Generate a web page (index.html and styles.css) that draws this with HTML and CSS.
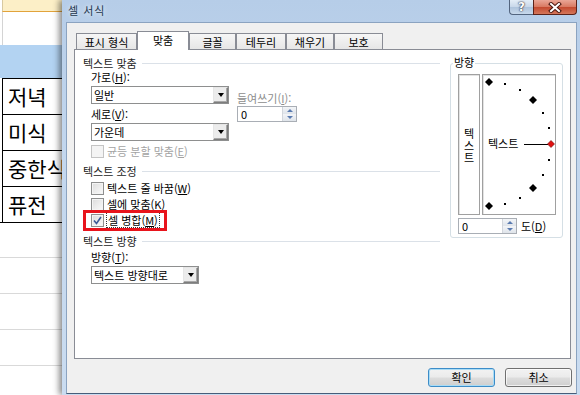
FILE: index.html
```html
<!DOCTYPE html>
<html lang="ko">
<head>
<meta charset="utf-8">
<title>셀 서식</title>
<link rel="stylesheet" href="styles.css">
</head>
<body>
<div class="screen">
  <div class="sheet">
    <div class="r-head"></div>
    <div class="r-white"></div>
    <div class="r-blue"></div>
    <div class="r-data">저녁</div>
    <div class="r-data">미식</div>
    <div class="r-data">중한식</div>
    <div class="r-data">퓨전</div>
    <div class="r-empty"></div>
    <div class="r-empty"></div>
    <div class="r-empty"></div>
    <div class="r-empty"></div>
    <div class="r-empty"></div>
  </div>

  <div class="window">
    <div class="titlebar">
      <span class="title">셀 서식</span>
      <div class="caption-btns">
        <div class="cap-help">?</div>
        <div class="cap-close">
          <svg width="14" height="11" viewBox="0 0 14 11">
            <path d="M3 2 L11 9 M11 2 L3 9" stroke="#4a1710" stroke-width="4" stroke-linecap="square"/>
            <path d="M3 2 L11 9 M11 2 L3 9" stroke="#fff" stroke-width="2" stroke-linecap="square"/>
          </svg>
        </div>
      </div>
    </div>

    <div class="client">
      <div class="tabs">
        <div class="tab t1">표시 형식</div>
        <div class="tab t2 active">맞춤</div>
        <div class="tab t3">글꼴</div>
        <div class="tab t4">테두리</div>
        <div class="tab t5">채우기</div>
        <div class="tab t6">보호</div>
      </div>

      <div class="panel">
        <div class="left">
          <div class="group-label"><span>텍스트 맞춤</span><i class="rule"></i></div>
          <div class="align-block">
            <div class="col-main">
              <div class="lbl">가로(<u>H</u>):</div>
              <div class="combo wide"><span class="combo-text">일반</span><span class="drop"><i class="tri"></i></span></div>
              <div class="lbl gap3">세로(<u>V</u>):</div>
              <div class="combo wide"><span class="combo-text">가운데</span><span class="drop"><i class="tri"></i></span></div>
            </div>
            <div class="col-indent">
              <div class="lbl dim">들여쓰기(<u>I</u>):</div>
              <div class="spin indent-spin"><span class="spin-text">0</span><span class="spin-btns"><i class="up"></i><i class="down"></i></span></div>
            </div>
          </div>
          <div class="check disabled first"><span class="box"></span><span class="ctext">균등 분할 맞춤(<u>E</u>)</span></div>

          <div class="group-label mt6"><span>텍스트 조정</span><i class="rule"></i></div>
          <div class="check row16 first2"><span class="box"></span><span class="ctext">텍스트 줄 바꿈(<u>W</u>)</span></div>
          <div class="check row16"><span class="box"></span><span class="ctext">셀에 맞춤(<u>K</u>)</span></div>
          <div class="check row16 highlight"><span class="box checked"><svg width="9" height="9" viewBox="0 0 9 9"><path d="M1 4.5 L3.5 7.5 L8 1" fill="none" stroke="#3c5a96" stroke-width="1.6"/></svg></span><span class="ctext focus">셀 병합(<u>M</u>)</span></div>

          <div class="group-label mt6"><span>텍스트 방향</span><i class="rule"></i></div>
          <div class="sub">
            <div class="lbl gap2">방향(<u>T</u>):</div>
            <div class="combo narrow"><span class="combo-text">텍스트 방향대로</span><span class="drop"><i class="tri"></i></span></div>
          </div>
        </div>

        <div class="orient">
          <div class="orient-label">방향</div>
          <div class="orient-boxes">
            <div class="vbox"><span class="vtext">텍스트</span></div>
            <div class="dial">
              <svg width="72" height="139" viewBox="0 0 72 139">
                <g fill="#000">
                  <path d="M6 3 L10 7 L6 11 L2 7 Z"/>
                  <rect x="21" y="8" width="2" height="2"/>
                  <rect x="36" y="14" width="2" height="2"/>
                  <path d="M50 21 L54 25 L50 29 L46 25 Z"/>
                  <rect x="59" y="37" width="2" height="2"/>
                  <rect x="65" y="52" width="2" height="2"/>
                  <rect x="65" y="84" width="2" height="2"/>
                  <rect x="59" y="99" width="2" height="2"/>
                  <path d="M50 109 L54 113 L50 117 L46 113 Z"/>
                  <rect x="36" y="122" width="2" height="2"/>
                  <rect x="21" y="128" width="2" height="2"/>
                  <path d="M6 127 L10 131 L6 135 L2 131 Z"/>
                </g>
                <text x="5" y="73" font-family="Noto Sans CJK KR, sans-serif" font-size="11" fill="#000">텍스트</text>
                <path d="M41 69.5 H65" stroke="#000" stroke-width="1"/>
                <path d="M68 65.5 L71.5 69 L68 72.5 L64.5 69 Z" fill="#e01010" stroke="#600" stroke-width="0.6"/>
              </svg>
            </div>
          </div>
          <div class="deg-row">
            <div class="spin deg-spin"><span class="spin-text">0</span><span class="spin-btns"><i class="up"></i><i class="down"></i></span></div>
            <span class="deg-lbl">도(<u>D</u>)</span>
          </div>
        </div>
      </div>

      <div class="buttons">
        <div class="btn default">확인</div>
        <div class="btn">취소</div>
      </div>
    </div>
  </div>
</div>
</body>
</html>
```

FILE: styles.css
```css
*, *::before, *::after { box-sizing: border-box; }
html, body { margin: 0; padding: 0; }
body {
  width: 580px;
  height: 395px;
  overflow: hidden;
  background: #fff;
  color: #000;
  font-family: "Noto Sans CJK KR", "Noto Sans", sans-serif;
  font-size: 11px;
}
u { text-decoration: underline; text-underline-offset: 1px; }

.screen { display: flex; width: 580px; height: 395px; }

/* spreadsheet behind the dialog */
.sheet {
  width: 62px;
  flex: none;
  display: flex;
  flex-direction: column;
  overflow: hidden;
  background: #fff;
}
.r-head { flex: none; height: 12px; background: #fcefc7; border-bottom: 1px solid #e2a33b; border-left: 1px solid #d8c9a0; margin-left: 2px; }
.r-white { flex: none; height: 33px; border-left: 1px solid #d4d4d4; margin-left: 2px; }
.r-blue { flex: none; height: 33px; background: #b3d3f2; }
.r-data {
  flex: none;
  height: 36px;
  margin-left: 2px;
  border-left: 1px solid #000;
  border-top: 1px solid #000;
  padding-left: 5px;
  font-size: 21px;
  line-height: 34px;
  white-space: nowrap;
  color: #000;
}
.r-data + .r-empty { border-top: 1px solid #000; }
.r-empty { flex: none; height: 36px; border-bottom: 1px solid #d9d9d9; }

/* window */
.window {
  flex: 1;
  display: flex;
  flex-direction: column;
  padding: 0 3px 1px 4px;
  background: linear-gradient(180deg, #b6cde8 0%, #c3d7ee 40%, #cadcf0 100%);
  box-shadow: -3px 0 6px rgba(0, 0, 0, 0.45);
  position: relative;
}
.titlebar {
  height: 22px;
  flex: none;
  display: flex;
  align-items: flex-start;
  padding-left: 2px;
}
.title {
  padding-top: 3px;
  line-height: 14px;
  font-size: 11px;
  color: #23364d;
  text-shadow: 0 0 5px rgba(255, 255, 255, 0.9);
  letter-spacing: 1px;
}
.caption-btns { margin-left: auto; display: flex; }
.cap-help {
  width: 24px;
  height: 15px;
  border: 1px solid #53657f;
  border-top: none;
  border-right: none;
  border-bottom-left-radius: 4px;
  background: linear-gradient(180deg, #e4edf7 0%, #c9d8ea 48%, #aec3dc 52%, #c8d9ec 100%);
  color: #fff;
  font-weight: bold;
  font-size: 12px;
  line-height: 14px;
  text-align: center;
  font-family: "DejaVu Sans", sans-serif;
  text-shadow: 0 0 2px #223, 0 0 1px #223;
}
.cap-close {
  width: 44px;
  height: 15px;
  border: 1px solid #5b2219;
  border-top: none;
  border-bottom-right-radius: 4px;
  background: linear-gradient(180deg, #eaa696 0%, #d97a63 48%, #c44a30 52%, #d4765a 100%);
  display: flex;
  align-items: center;
  justify-content: center;
}

.client {
  flex: 1;
  display: flex;
  flex-direction: column;
  background: #f0f0f0;
  border: 1px solid #8ba3c0;
  border-bottom-color: #465d7a;
  padding: 8px 5px 6px 7px;
}

/* tabs */
.tabs {
  height: 18px;
  flex: none;
  display: flex;
  align-items: flex-end;
  padding-left: 2px;
  position: relative;
  z-index: 1;
}
.tab {
  height: 16px;
  border: 1px solid #898c95;
  border-bottom: none;
  background: linear-gradient(180deg, #f6f6f6, #e6e6e6);
  display: flex;
  align-items: center;
  justify-content: center;
  line-height: 14px;
  white-space: nowrap;
}
.tab.active { height: 19px; margin-bottom: -1px; background: #fff; padding-bottom: 2px; }
.t1 { width: 61px; }
.t2 { width: 52px; }
.t3 { width: 47px; }
.t4 { width: 50px; }
.t5 { width: 48px; }
.t6 { width: 49px; }

.panel {
  height: 310px;
  flex: none;
  background: #fff;
  border: 1px solid #898c95;
  display: flex;
  padding: 6px 7px 0 8px;
  gap: 10px;
}

.left { width: 357px; flex: none; display: flex; flex-direction: column; align-items: flex-start; }
.group-label {
  width: 100%;
  height: 14px;
  display: flex;
  align-items: center;
  line-height: 14px;
  color: #1b1b1b;
}
.group-label .rule { flex: 1; height: 1px; background: #dbe1e8; margin-left: 5px; margin-top: 1px; }
.mt6 { margin-top: 6px; }

.align-block { display: flex; padding-left: 8px; }
.col-main { display: flex; flex-direction: column; }
.col-indent { display: flex; flex-direction: column; margin-left: 8px; padding-top: 21px; }
.lbl { line-height: 14px; height: 14px; white-space: nowrap; }
.gap3 { margin-top: 3px; }
.gap2 { margin-top: 2px; }
.dim { color: #8d8d8d; }

.combo {
  margin-top: 2px;
  height: 18px;
  display: flex;
  border: 1px solid #8e8f8f;
  background: #fff;
}
.combo.wide { width: 138px; }
.combo.narrow { width: 108px; }
.combo-text { flex: 1; line-height: 16px; padding-left: 2px; white-space: nowrap; overflow: hidden; }
.drop {
  width: 15px;
  border: 1px solid #7d7d7d;
  border-top-color: #e6e6e6;
  border-left-color: #e6e6e6;
  background: #ececec;
  display: flex;
  align-items: center;
  justify-content: center;
  box-shadow: inset -1px -1px 0 #a8a8a8;
}
.tri { width: 0; height: 0; border-left: 3.5px solid transparent; border-right: 3.5px solid transparent; border-top: 4px solid #000; }

.spin {
  height: 16px;
  display: flex;
  border: 1px solid #a9aeb5;
  background: #fff;
}
.indent-spin { width: 60px; margin-top: 1px; }
.deg-spin { width: 59px; }
.spin-text { flex: 1; line-height: 14px; padding-left: 3px; }
.spin-btns { width: 14px; display: flex; flex-direction: column; border-left: 1px solid #d2d6dc; }
.spin-btns i {
  flex: 1;
  display: flex;
  align-items: center;
  justify-content: center;
  background: linear-gradient(180deg, #f3f5f8, #dfe4ea);
}
.spin-btns .up::after { content: ""; border-left: 3px solid transparent; border-right: 3px solid transparent; border-bottom: 3px solid #5a7bb0; }
.spin-btns .down::after { content: ""; border-left: 3px solid transparent; border-right: 3px solid transparent; border-top: 3px solid #5a7bb0; }

.check {
  display: inline-flex;
  align-items: center;
  padding-left: 8px;
  white-space: nowrap;
  position: relative;
}
.check.first { margin-top: 3px; height: 14px; line-height: 14px; }
.check.row16 { height: 16px; line-height: 14px; }
.check.first2 { margin-top: 2px; }
.box {
  width: 13px;
  height: 13px;
  border: 1px solid #8e8f8f;
  background: linear-gradient(135deg, #dcdcdc, #fbfbfb);
  box-shadow: inset 0 0 0 1px #f4f4f4;
  margin-right: 3px;
  display: flex;
  align-items: center;
  justify-content: center;
  flex: none;
}
.check.disabled { color: #a3a3a3; }
.check.disabled .box { border-color: #c4c4c4; background: #f4f4f4; }
.highlight::after {
  content: "";
  position: absolute;
  left: 0;
  top: -2px;
  width: 84px;
  height: 21px;
  border: 3px solid #e8141c;
  pointer-events: none;
}
.ctext.focus { outline: 1px dotted #333; outline-offset: 0; padding: 0 1px; }

.sub { padding-left: 8px; display: flex; flex-direction: column; }

/* orientation group */
.orient {
  width: 113px;
  height: 175px;
  flex: none;
  margin-top: 7px;
  border: 1px solid #d5dfe5;
  border-radius: 3px;
  padding: 0 0 0 7px;
  display: flex;
  flex-direction: column;
}
.orient-label {
  margin-top: -9px;
  margin-left: -5px;
  padding: 0 1px;
  background: #fff;
  align-self: flex-start;
  line-height: 14px;
  height: 14px;
}
.orient-boxes { display: flex; gap: 2px; margin-top: 5px; }
.vbox {
  width: 22px;
  height: 141px;
  border: 1px solid #a0a0a0;
  box-shadow: inset 1px 1px 0 #e3e3e3;
  display: flex;
  align-items: center;
  justify-content: center;
  padding-top: 3px;
}
.vtext { writing-mode: vertical-lr; text-orientation: upright; letter-spacing: 1px; line-height: 12px; }
.dial {
  width: 74px;
  height: 141px;
  border: 1px solid #a0a0a0;
  box-shadow: inset 1px 1px 0 #e3e3e3;
}
.dial svg { display: block; }
.deg-row { display: flex; align-items: center; margin-top: 3px; }
.deg-lbl { margin-left: 4px; line-height: 14px; }

/* buttons */
.buttons {
  margin-top: 9px;
  height: 19px;
  flex: none;
  display: flex;
  justify-content: flex-end;
  gap: 10px;
  margin-right: -1px;
}
.btn {
  width: 67px;
  height: 19px;
  border: 1px solid #707070;
  border-radius: 3px;
  background: linear-gradient(180deg, #f2f2f2 0%, #ebebeb 48%, #dddddd 52%, #cfcfcf 100%);
  box-shadow: inset 0 0 0 1px rgba(255, 255, 255, 0.7);
  text-align: center;
  line-height: 17px;
}
.btn.default {
  border-color: #3c8cc8;
  box-shadow: inset 0 0 0 1px #a9dcf6;
}
```
